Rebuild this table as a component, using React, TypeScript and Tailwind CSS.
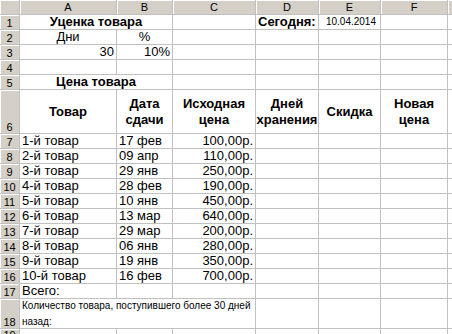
import React from "react";

const base = "bg-white flex overflow-visible whitespace-nowrap text-black px-[2px]";
const hdr =
  "bg-[#d4d0c8] flex justify-center text-black text-[11px] leading-[12px] shadow-[inset_1px_1px_0_#ffffff]";

function C({
  children,
  className = "",
  size = "text-[13px] leading-[14px]",
}: {
  children?: React.ReactNode;
  className?: string;
  size?: string;
}) {
  return <div className={`${base} ${size} items-end ${className}`}>{children}</div>;
}

function H({ children, className = "items-end" }: { children?: React.ReactNode; className?: string }) {
  return <div className={`${hdr} ${className}`}>{children}</div>;
}

function Th({ children }: { children?: React.ReactNode }) {
  return (
    <div className={`${base} text-[13px] leading-[16px] items-center justify-center text-center font-bold`}>
      <div>{children}</div>
    </div>
  );
}

const items: [string, string, string][] = [
  ["1-й товар", "17 фев", "100,00р."],
  ["2-й товар", "09 апр", "110,00р."],
  ["3-й товар", "29 янв", "250,00р."],
  ["4-й товар", "28 фев", "190,00р."],
  ["5-й товар", "10 янв", "450,00р."],
  ["6-й товар", "13 мар", "640,00р."],
  ["7-й товар", "29 мар", "200,00р."],
  ["8-й товар", "06 янв", "280,00р."],
  ["9-й товар", "19 янв", "350,00р."],
  ["10-й товар", "16 фев", "700,00р."],
];

export default function App() {
  return (
    <div
      className="w-[452px] h-[334px] overflow-hidden bg-white"
      style={{ fontFamily: '"Liberation Sans", Arial, sans-serif' }}
    >
      <div className="grid w-max gap-px bg-[#c0c0c0] grid-cols-[19px_96px_55px_82px_62px_61px_66px_40px] grid-rows-[14px_14px_14px_14px_14px_14px_43px_repeat(11,14px)_29px_20px]">
        {/* column header */}
        <H />
        <H className="items-center">A</H>
        <H className="items-center">B</H>
        <H className="items-center">C</H>
        <H className="items-center">D</H>
        <H className="items-center">E</H>
        <H className="items-center">F</H>
        <H className="items-center" />

        {/* row 1 */}
        <H>1</H>
        <C className="col-span-2 justify-center font-bold">Уценка товара</C>
        <C />
        <C className="font-bold">Сегодня:</C>
        <C className="justify-end pr-[4px]" size="text-[10px] leading-[12px] pb-[1px]">
          10.04.2014
        </C>
        <C />
        <C />

        {/* row 2 */}
        <H>2</H>
        <C className="justify-center">Дни</C>
        <C className="justify-center">%</C>
        <C />
        <C />
        <C />
        <C />
        <C />

        {/* row 3 */}
        <H>3</H>
        <C className="justify-end">30</C>
        <C className="justify-end">10%</C>
        <C />
        <C />
        <C />
        <C />
        <C />

        {/* row 4 */}
        <H>4</H>
        <C />
        <C />
        <C />
        <C />
        <C />
        <C />
        <C />

        {/* row 5 */}
        <H>5</H>
        <C className="col-span-2 justify-center font-bold">Цена товара</C>
        <C />
        <C />
        <C />
        <C />
        <C />

        {/* row 6 */}
        <H>6</H>
        <Th>Товар</Th>
        <Th>
          Дата
          <br />
          сдачи
        </Th>
        <Th>
          Исходная
          <br />
          цена
        </Th>
        <Th>
          Дней
          <br />
          хранения
        </Th>
        <Th>Скидка</Th>
        <Th>
          Новая
          <br />
          цена
        </Th>
        <C />

        {/* rows 7-16 */}
        {items.map(([n, d, p], i) => (
          <React.Fragment key={n}>
            <H>{i + 7}</H>
            <C>{n}</C>
            <C>{d}</C>
            <C className="justify-end">{p}</C>
            <C />
            <C />
            <C />
            <C />
          </React.Fragment>
        ))}

        {/* row 17 */}
        <H>17</H>
        <C>Всего:</C>
        <C />
        <C />
        <C />
        <C />
        <C />
        <C />

        {/* row 18 */}
        <H>18</H>
        <div className="col-span-3 bg-white text-black text-[10px] leading-[16px] px-[2px] flex items-center">
          <div>Количество товара, поступившего более 30 дней назад:</div>
        </div>
        <C />
        <C />
        <C />
        <C />

        {/* row 19 */}
        <H className="items-start">19</H>
        <C />
        <C />
        <C />
        <C />
        <C />
        <C />
        <C />
      </div>
    </div>
  );
}
